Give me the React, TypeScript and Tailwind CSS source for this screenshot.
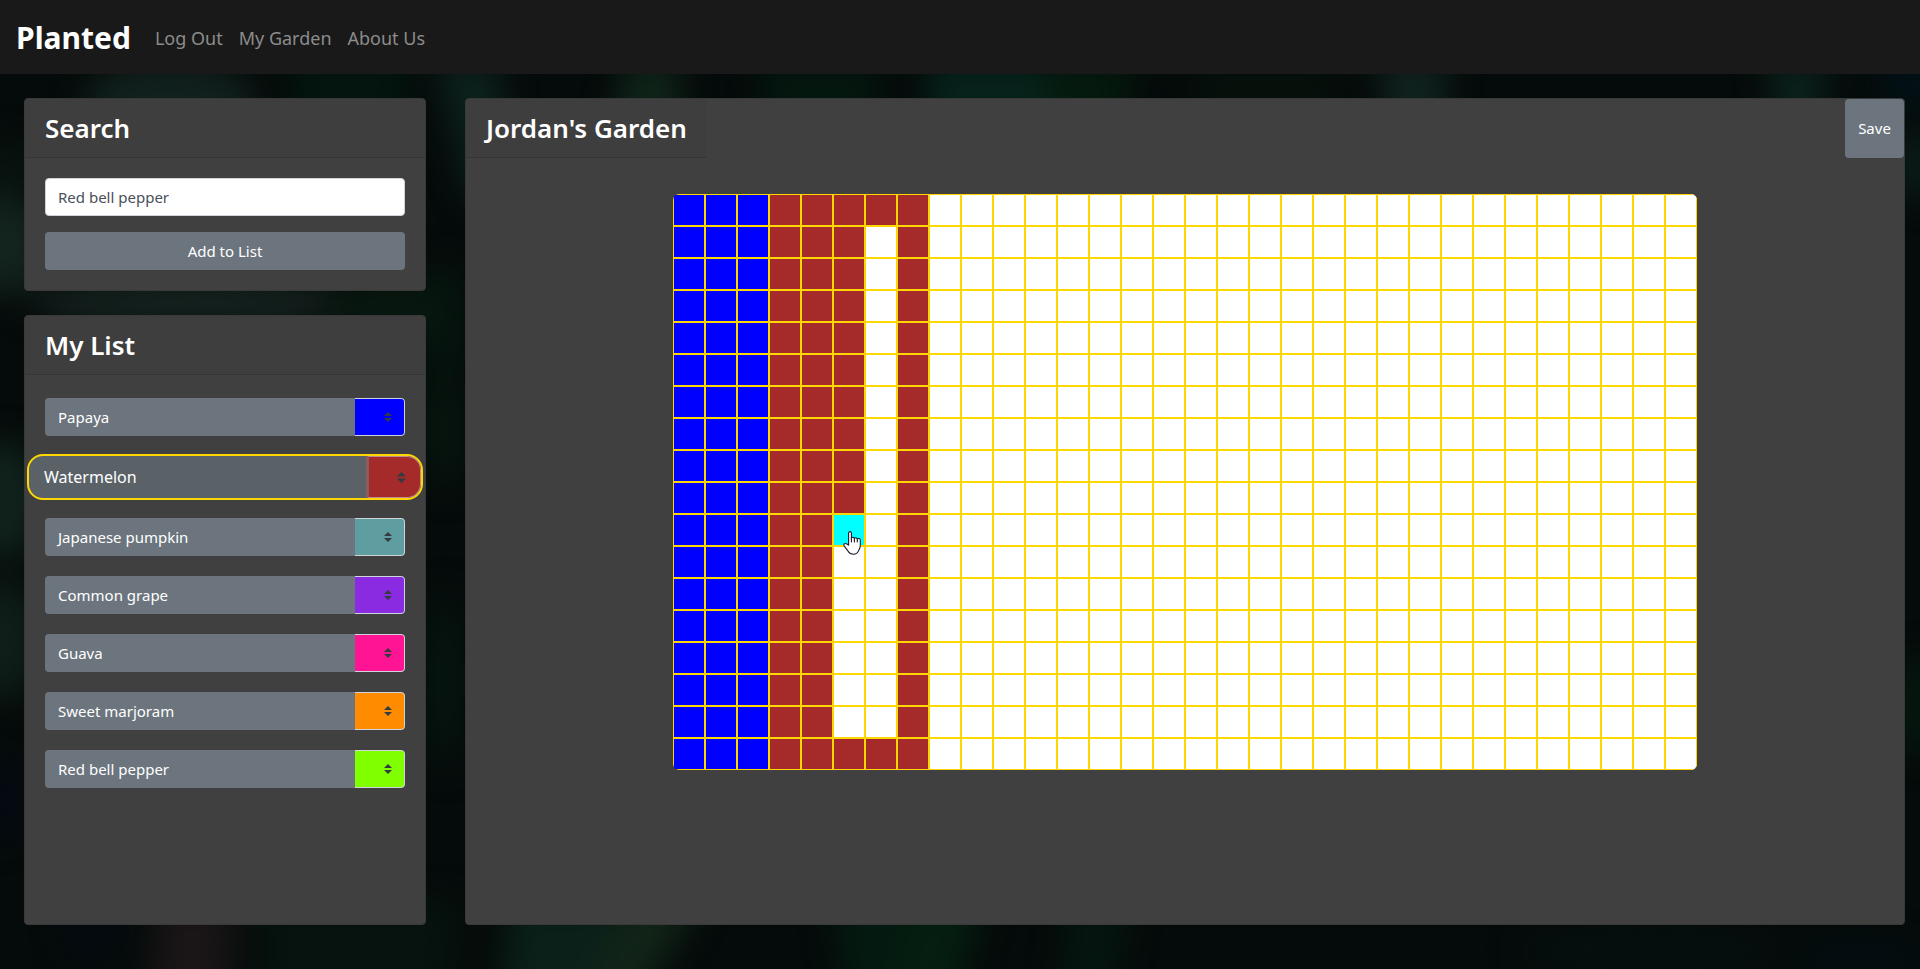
import { useState } from "react";

type Plant = { name: string; color: string };

const COLORS = [
  { name: "blue", bg: "bg-[#0000ff]" },
  { name: "brown", bg: "bg-[#a52a2a]" },
  { name: "cadetblue", bg: "bg-[#5f9ea0]" },
  { name: "blueviolet", bg: "bg-[#8a2be2]" },
  { name: "deeppink", bg: "bg-[#ff1493]" },
  { name: "darkorange", bg: "bg-[#ff8c00]" },
  { name: "chartreuse", bg: "bg-[#7fff00]" },
];

const INITIAL_PLANTS: Plant[] = [
  { name: "Papaya", color: "blue" },
  { name: "Watermelon", color: "brown" },
  { name: "Japanese pumpkin", color: "cadetblue" },
  { name: "Common grape", color: "blueviolet" },
  { name: "Guava", color: "deeppink" },
  { name: "Sweet marjoram", color: "darkorange" },
  { name: "Red bell pepper", color: "chartreuse" },
];

const COLS = 32;
const ROWS = 18;
const HOVERED = { row: 10, col: 5 };

function bgOf(color: string) {
  return COLORS.find((c) => c.name === color)?.bg ?? "bg-white";
}

function initialCell(row: number, col: number): string {
  if (col < 3) return "blue";
  if (col < 5 || col === 7) return "brown";
  if (col === 5) return row < 10 || row === ROWS - 1 ? "brown" : "";
  if (col === 6) return row === 0 || row === ROWS - 1 ? "brown" : "";
  return "";
}

const INITIAL_CELLS = Array.from({ length: ROWS * COLS }, (_, i) =>
  initialCell(Math.floor(i / COLS), i % COLS),
);

function Backdrop() {
  return (
    <svg
      className="pointer-events-none absolute inset-0 h-full w-full"
      viewBox="0 0 1920 969"
      preserveAspectRatio="none"
      aria-hidden="true"
    >
      <defs>
        <filter
          id="soft"
          filterUnits="userSpaceOnUse"
          x="-100"
          y="-100"
          width="2120"
          height="1169"
          colorInterpolationFilters="sRGB"
        >
          <feGaussianBlur stdDeviation="16" />
        </filter>
      </defs>
      <rect width="1920" height="969" fill="#050b0a" />
      <g filter="url(#soft)">
        <ellipse cx="170" cy="100" rx="85" ry="40" fill="#11211d" />
        <ellipse cx="350" cy="80" rx="60" ry="70" fill="#03150e" />
        <ellipse cx="0" cy="170" rx="40" ry="30" fill="#08130f" />
        <ellipse cx="0" cy="245" rx="50" ry="50" fill="#13231e" />
        <ellipse cx="190" cy="303" rx="160" ry="26" fill="#15211e" />
        <ellipse cx="390" cy="310" rx="60" ry="30" fill="#08180f" />
        <ellipse cx="0" cy="500" rx="45" ry="60" fill="#10211b" />
        <ellipse cx="0" cy="640" rx="40" ry="60" fill="#0f1e18" />
        <ellipse cx="0" cy="800" rx="30" ry="40" fill="#050a12" />
        <path d="M435 60L500 60L510 200L470 200Z" fill="#0c211d" />
        <ellipse cx="445" cy="320" rx="18" ry="60" fill="#06170f" />
        <ellipse cx="445" cy="430" rx="18" ry="60" fill="#07170f" />
        <ellipse cx="445" cy="680" rx="20" ry="90" fill="#051510" />
        <path d="M625 60L680 60L680 140L610 140Z" fill="#0f2419" />
        <path d="M760 60L880 60L870 140L770 140Z" fill="#04170f" />
        <path d="M925 60L1090 60L1060 140L935 140Z" fill="#06231b" />
        <path d="M1050 60L1140 60L1110 140L1040 140Z" fill="#051a0e" />
        <path d="M1190 60L1340 60L1330 140L1210 140Z" fill="#06100b" />
        <path d="M1375 60L1450 60L1440 140L1395 140Z" fill="#10231f" />
        <path d="M1765 60L1830 60L1815 140L1780 140Z" fill="#0b211c" />
        <ellipse cx="1920" cy="84" rx="45" ry="20" fill="#021219" />
        <ellipse cx="1918" cy="165" rx="22" ry="35" fill="#0b1d19" />
        <ellipse cx="1918" cy="705" rx="22" ry="50" fill="#05180f" />
        <path d="M155 900L235 900L230 1000L150 1000Z" fill="#1a1517" />
        <ellipse cx="90" cy="930" rx="25" ry="30" fill="#050a12" />
        <path d="M260 900L460 900L450 1000L260 1000Z" fill="#06130f" />
        <path d="M510 900L700 900L640 1000L500 1000Z" fill="#0a2019" />
        <path d="M630 900L700 900L640 1000L575 1000Z" fill="#122418" />
        <path d="M830 900L985 900L955 1000L850 1000Z" fill="#041a10" />
        <path d="M920 900L985 900L950 1000L890 1000Z" fill="#051e11" />
        <path d="M1070 900L1130 900L1110 1000L1060 1000Z" fill="#05160f" />
        <ellipse cx="1650" cy="950" rx="130" ry="30" fill="#050f0d" />
        <ellipse cx="1860" cy="960" rx="60" ry="20" fill="#030d12" />
      </g>
    </svg>
  );
}

function CardHeader({ children, inline }: { children: string; inline?: boolean }) {
  return (
    <h2
      className={`${inline ? "rounded-tl" : "rounded-t"} border-b border-black/15 bg-black/[0.03] px-5 py-3 text-[26px] leading-[34px] font-semibold`}
    >
      {children}
    </h2>
  );
}

function PlantRow({
  plant,
  selected,
  onSelect,
  onColor,
}: {
  plant: Plant;
  selected: boolean;
  onSelect: () => void;
  onColor: (color: string) => void;
}) {
  return (
    <li
      className={
        selected
          ? "-mx-[18px] -my-0.5 flex h-[46px] overflow-hidden rounded-2xl border-2 border-[#ffd700] bg-[#5a6268]"
          : "flex h-[38px] overflow-hidden rounded bg-[#6c757d]"
      }
    >
      <button
        type="button"
        onClick={onSelect}
        className={`min-w-0 flex-1 cursor-pointer truncate text-left ${selected ? "px-[15px] text-base" : "px-[13px] text-[15px]"}`}
      >
        {plant.name}
      </button>
      <div className={`relative ${selected ? "w-[55px]" : "w-[50px]"}`}>
        <select
          aria-label={`Color of ${plant.name}`}
          value={plant.color}
          onChange={(e) => onColor(e.target.value)}
          className={`h-full w-full cursor-pointer appearance-none text-transparent outline-none ${bgOf(plant.color)} ${
            selected
              ? "rounded-r-[14px] border-y border-r border-l-[3px] border-[#c08c8f] border-l-[#8d5c5f]"
              : "rounded-r border-y border-r border-[#ced4da]"
          }`}
        >
          {COLORS.map((c) => (
            <option key={c.name} value={c.name} className={c.bg}>
              {c.name}
            </option>
          ))}
        </select>
        <svg
          viewBox="0 0 4 5"
          aria-hidden="true"
          className={`pointer-events-none absolute inset-y-0 my-auto ${selected ? "right-[15px] h-[11px] w-[9px]" : "right-[13px] h-[10px] w-2"}`}
        >
          <path fill="#343a40" d="M2 0L0 2h4zm0 5L0 3h4z" />
        </svg>
      </div>
    </li>
  );
}

function HandCursor() {
  return (
    <svg
      viewBox="0 0 18 24"
      aria-hidden="true"
      className="pointer-events-none absolute top-[17px] left-2.5 z-10 h-6 w-[18px]"
    >
      <path
        d="M5.600 14.200V2.200C5.600 1.200 6.200.6 7 .6S8.400 1.200 8.400 2.200V7.200C9 5.900 11 5.900 11.300 7.400C12 6.300 13.900 6.500 14.200 7.900C15.300 7.100 17.300 7.500 17.300 9V14.500C17.300 17 16.300 18.200 15.600 19.600C14.600 22 13 23.200 10.500 23.200C7.800 23.200 6.200 22 5.100 20.200L1.300 15.200C.3 13.700 1 12.500 2.300 12.500C3.700 12.500 4.700 13.300 5.600 14.200Z"
        fill="#fff"
        stroke="#1a1a2a"
        strokeWidth="1.1"
        strokeLinejoin="round"
      />
      <path
        d="M8.400 7V11M11.400 7.500V11M14.300 8V11"
        fill="none"
        stroke="#1a1a2a"
        strokeWidth="1.1"
        strokeLinecap="round"
      />
    </svg>
  );
}

export default function App() {
  const [plants, setPlants] = useState(INITIAL_PLANTS);
  const [selected, setSelected] = useState(1);
  const [query, setQuery] = useState("Red bell pepper");
  const [cells, setCells] = useState(INITIAL_CELLS);

  const addPlant = () => {
    const name = query.trim();
    if (name && !plants.some((p) => p.name === name)) {
      setPlants([...plants, { name, color: COLORS[plants.length % COLORS.length].name }]);
    }
  };

  const paint = (index: number) =>
    setCells(cells.map((c, i) => (i === index ? plants[selected].color : c)));

  return (
    <div className="relative flex min-h-screen flex-col bg-[#050b0a] font-['Noto_Sans','Open_Sans',sans-serif] text-[15px] text-white">
      <Backdrop />

      <nav className="relative flex items-center bg-[#191919] px-4 pt-[13px] pb-[11px]">
        <a href="#home" className="mr-4 text-[30px] leading-[50px] font-bold">
          Planted
        </a>
        <div className="flex text-lg text-[#8c8c8c]">
          <a href="#logout" className="px-2 py-2">Log Out</a>
          <a href="#garden" className="px-2 py-2">My Garden</a>
          <a href="#about" className="px-2 py-2">About Us</a>
        </div>
      </nav>

      <main className="relative flex flex-1 gap-[39px] pt-6 pr-[15px] pb-11 pl-6">
        <aside className="flex w-[402px] shrink-0 flex-col gap-6">
          <section className="rounded border border-[#393939] bg-[#404040]">
            <CardHeader>Search</CardHeader>
            <form
              className="flex flex-col gap-4 p-5"
              onSubmit={(e) => {
                e.preventDefault();
                addPlant();
              }}
            >
              <input
                type="text"
                aria-label="Plant name"
                value={query}
                onChange={(e) => setQuery(e.target.value)}
                className="h-[38px] w-full rounded border border-[#ced4da] bg-white px-3 text-[#495057] outline-none"
              />
              <button type="submit" className="h-[38px] w-full cursor-pointer rounded bg-[#6c757d]">
                Add to List
              </button>
            </form>
          </section>

          <section className="flex-1 rounded border border-[#393939] bg-[#404040]">
            <CardHeader>My List</CardHeader>
            <ul className="flex flex-col gap-5 px-5 pt-[23px] pb-5">
              {plants.map((plant, i) => (
                <PlantRow
                  key={plant.name}
                  plant={plant}
                  selected={i === selected}
                  onSelect={() => setSelected(i)}
                  onColor={(color) =>
                    setPlants(plants.map((p, j) => (j === i ? { ...p, color } : p)))
                  }
                />
              ))}
            </ul>
          </section>
        </aside>

        <section className="min-w-0 flex-1 rounded border border-[#393939] bg-[#404040]">
          <div className="flex justify-between">
            <CardHeader inline>Jordan's Garden</CardHeader>
            <button type="button" className="w-[59px] cursor-pointer rounded bg-[#6c757d]">
              Save
            </button>
          </div>
          <div className="flex justify-center px-5 pt-9 pb-5">
            <div className="relative grid grid-cols-[repeat(32,32px)] overflow-hidden rounded-md">
              {cells.map((color, i) => {
                const hovered = i === HOVERED.row * COLS + HOVERED.col;
                return (
                  <div key={i} className="relative h-8 w-8">
                    <button
                      type="button"
                      aria-label={`Row ${Math.floor(i / COLS) + 1}, column ${(i % COLS) + 1}`}
                      onClick={() => paint(i)}
                      className={`block h-8 w-8 cursor-pointer border border-[#ffd700] ${hovered ? "bg-[#00ffff]" : bgOf(color)}`}
                    />
                    {hovered && <HandCursor />}
                  </div>
                );
              })}
            </div>
          </div>
        </section>
      </main>
    </div>
  );
}
